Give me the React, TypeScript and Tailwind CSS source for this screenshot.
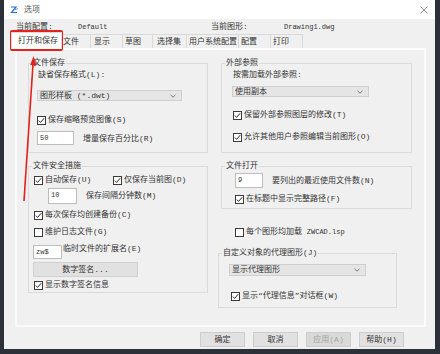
import React from 'react';

const tabs = [
  { label: '文件', w: 'w-[29px]', pl: 'pl-[1px]' },
  { label: '显示', w: 'w-[32px]', pl: 'pl-[3px]' },
  { label: '草图', w: 'w-[30px]', pl: 'pl-[2px]' },
  { label: '选择集', w: 'w-[34px]', pl: 'pl-[4px]' },
  { label: '用户系统配置', w: 'w-[52px]', pl: 'pl-[2px]' },
  { label: '配置', w: 'w-[32px]', pl: 'pl-[2px]' },
  { label: '打印', w: 'w-[32px]', pl: 'pl-[2px]' },
];

function Box({ checked = true }: { checked?: boolean }) {
  return (
    <span className="flex h-[9px] w-[9px] shrink-0 items-center justify-center border border-[#3a3a3a] bg-white">
      {checked && (
        <svg width="7" height="7" viewBox="0 0 7 7">
          <path d="M0.8 3.6 L2.6 5.4 L6.2 1.2" fill="none" stroke="#262626" strokeWidth="1" />
        </svg>
      )}
    </span>
  );
}

function CheckRow({ label, checked = true, className = '' }: { label: React.ReactNode; checked?: boolean; className?: string }) {
  return (
    <div className={`flex h-[10px] items-center gap-[2px] ${className}`}>
      <Box checked={checked} />
      <span className="whitespace-nowrap">{label}</span>
    </div>
  );
}

function Select({ value, className = '' }: { value: string; className?: string }) {
  return (
    <div className={`flex items-center justify-between border border-[#cfcfcf] bg-[#e5e5e5] pl-[2px] pr-[5px] ${className}`}>
      <span className="whitespace-nowrap">{value}</span>
      <svg width="6" height="4" viewBox="0 0 6 4">
        <path d="M0.5 0.8 L3 3.2 L5.5 0.8" fill="none" stroke="#6b6b6b" strokeWidth="0.9" />
      </svg>
    </div>
  );
}

function Field({ value, className = '' }: { value: string; className?: string }) {
  return (
    <div className={`shrink-0 border border-[#bdbdbd] bg-white pl-[2px] pt-[1px] text-[7px] leading-[10px] ${className}`}>
      {value}
    </div>
  );
}

function Group({ title, className = '', children }: { title: string; className?: string; children: React.ReactNode }) {
  return (
    <fieldset className={`border border-[#dadada] ${className}`}>
      <legend className="ml-[3px] px-[1px] leading-[10px]">{title}</legend>
      {children}
    </fieldset>
  );
}

function Button({ label, disabled = false }: { label: string; disabled?: boolean }) {
  return (
    <div
      className={`flex h-[15px] w-[45px] items-center justify-center border border-[#cdcdcd] ${
        disabled ? 'bg-[#d9d9d9] text-[#a3a3a3]' : 'bg-[#e1e1e1] text-[#333333]'
      }`}
    >
      {label}
    </div>
  );
}

export default function App() {
  return (
    <div className="relative flex h-[354px] w-[440px] overflow-hidden bg-[#2c3038] font-['Liberation_Mono','Noto_Sans_CJK_SC',monospace] text-[8px] leading-[10px] text-[#333333]">
      <div className="ml-[4px] flex h-[349px] w-[431px] flex-col bg-[#f0f0f0]">
        {/* title bar */}
        <div className="flex h-[19px] shrink-0 items-center bg-white pl-[6px] pr-[7px]">
          <svg width="9" height="9" viewBox="0 0 9 9">
            <path d="M1 2 L6 2 L1.5 7.5 L7 7.5" fill="none" stroke="#2f6fd6" strokeWidth="1.2" />
            <path d="M4.5 4.8 L8 3.6" fill="none" stroke="#5aa0f0" strokeWidth="1" />
          </svg>
          <span className="ml-[5px] text-[#5a5a5a]">选项</span>
          <svg className="ml-auto" width="8" height="8" viewBox="0 0 8 8">
            <path d="M0.5 0.5 L7.5 7.5 M7.5 0.5 L0.5 7.5" stroke="#7a7a7a" strokeWidth="0.8" />
          </svg>
        </div>

        {/* current profile / drawing */}
        <div className="mt-[3px] flex h-[10px] items-center pl-[12px]">
          <span className="w-[62px]">当前配置:</span>
          <span className="w-[133px] text-[7px]">Default</span>
          <span className="w-[73px]">当前图形:</span>
          <span className="text-[7px]">Drawing1.dwg</span>
        </div>

        {/* tabs */}
        <div className="flex h-[16px] items-start pl-[7px]">
          <div className="relative z-10 flex h-[17px] w-[51px] items-center border-x border-t border-[#d9d9d9] bg-white pl-[6px]">
            打开和保存
          </div>
          {tabs.map((t) => (
            <div
              key={t.label}
              className={`mt-[2px] flex h-[14px] items-center border-r border-t border-[#d9d9d9] ${t.w} ${t.pl}`}
            >
              {t.label}
            </div>
          ))}
        </div>

        {/* tab page */}
        <div className="ml-[11px] h-[279px] w-[411px] border-2 border-[#fbfbfb]">
          <div className="flex gap-[13px] pl-[11px] pt-[8px]">
            {/* left column */}
            <div className="flex w-[180px] flex-col">
              <Group title="文件保存" className="h-[95px]">
                <div className="flex flex-col pl-[8px]">
                  <div className="ml-[1px] mt-[2px] h-[10px]">缺省保存格式(L):</div>
                  <Select value="图形样板 (*.dwt)" className="mt-[10px] h-[11px] w-[145px]" />
                  <CheckRow label="保存缩略预览图像(S)" className="mt-[14px]" />
                  <div className="mt-[6px] flex items-center gap-[9px]">
                    <Field value="50" className="h-[14px] w-[37px]" />
                    <span className="mt-[1px]">增量保存百分比(R)</span>
                  </div>
                </div>
              </Group>

              <Group title="文件安全措施" className="mt-[8px] h-[132px]">
                <div className="flex flex-col pl-[5px]">
                  <div className="mt-[4px] flex">
                    <CheckRow label="自动保存(U)" className="w-[79px]" />
                    <CheckRow label="仅保存当前图(D)" />
                  </div>
                  <div className="mt-[3px] flex items-center gap-[9px] pl-[14px]">
                    <Field value="10" className="h-[16px] w-[29px]" />
                    <span>保存间隔分钟数(M)</span>
                  </div>
                  <CheckRow label="每次保存均创建备份(C)" className="mt-[6px]" />
                  <CheckRow label="维护日志文件(G)" checked={false} className="mt-[7px]" />
                  <div className="-ml-[1px] mt-[8px] flex items-start gap-[1px]">
                    <Field value="zw$" className="h-[14px] w-[29px]" />
                    <span className="-mt-[1px]">临时文件的扩展名(E)</span>
                  </div>
                  <div className="-ml-[1px] mt-[3px] flex h-[15px] w-[105px] items-center justify-center border border-[#d0d0d0] bg-[#e1e1e1]">
                    数字签名...
                  </div>
                  <CheckRow label="显示数字签名信息" className="mt-[3px]" />
                </div>
              </Group>
            </div>

            {/* right column */}
            <div className="flex w-[191px] flex-col">
              <Group title="外部参照" className="h-[95px]">
                <div className="flex flex-col pl-[11px]">
                  <div className="mt-[2px] h-[10px]">按需加载外部参照:</div>
                  <Select value="使用副本" className="-ml-[1px] mt-[6px] h-[11px] w-[137px]" />
                  <CheckRow label="保留外部参照图层的修改(T)" className="mt-[13px]" />
                  <CheckRow label="允许其他用户参照编辑当前图形(O)" className="mt-[12px]" />
                </div>
              </Group>

              <Group title="文件打开" className="mt-[8px] h-[48px]">
                <div className="flex flex-col pl-[13px]">
                  <div className="mt-[2px] flex items-center gap-[9px]">
                    <Field value="9" className="h-[15px] w-[28px]" />
                    <span>要列出的最近使用文件数(N)</span>
                  </div>
                  <CheckRow label="在标题中显示完整路径(F)" className="mt-[6px]" />
                </div>
              </Group>

              <CheckRow
                label={
                  <>
                    每个图形均加载 <span className="text-[7px]">ZWCAD.lsp</span>
                  </>
                }
                checked={false}
                className="ml-[14px] mt-[18px]"
              />

              <Group title="自定义对象的代理图形(J)" className="-ml-[3px] mt-[11px] h-[60px] w-[179px]">
                <div className="flex flex-col pl-[10px]">
                  <Select value="显示代理图形" className="mt-[6px] h-[12px] w-[137px]" />
                  <CheckRow label="显示“代理信息”对话框(W)" className="ml-[2px] mt-[15px]" />
                </div>
              </Group>
            </div>
          </div>
        </div>

        {/* dialog buttons */}
        <div className="mt-[5px] flex justify-end gap-[8px] pr-[31px]">
          <Button label="确定" />
          <Button label="取消" />
          <Button label="应用(A)" disabled />
          <Button label="帮助(H)" />
        </div>
      </div>

      {/* red annotation */}
      <div className="absolute left-[10px] top-[30px] h-[21px] w-[53px] rounded-[2px] border-2 border-[#e3221c]" />
      <svg className="absolute left-0 top-0" width="60" height="220" viewBox="0 0 60 220">
        <line x1="24" y1="201" x2="33" y2="64" stroke="#e3221c" strokeWidth="1.6" />
        <path d="M33.6 56 L30.2 65 L36.4 65.4 Z" fill="#e3221c" />
      </svg>
    </div>
  );
}
